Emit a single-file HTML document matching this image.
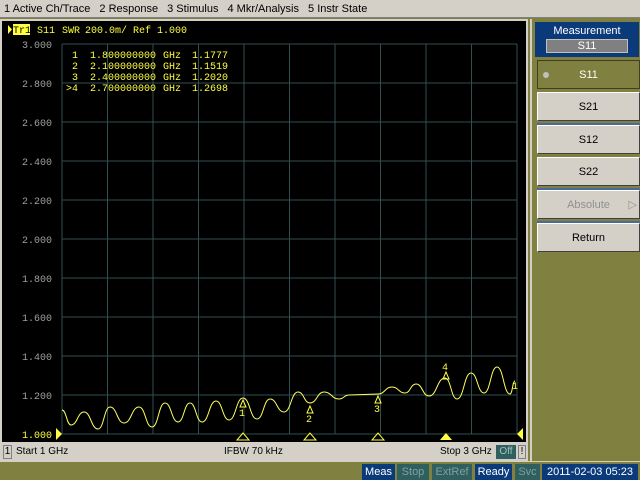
<!DOCTYPE html>
<html><head><style>
*{margin:0;padding:0;box-sizing:border-box}
body{width:640px;height:480px;background:#808040;position:relative;overflow:hidden;font-family:"Liberation Sans",sans-serif;font-size:11px}
#menu{position:absolute;left:0;top:0;width:640px;height:18px;background:#d4d0c8;border-bottom:1px solid #808080;font-size:11px;line-height:18px;color:#000}
#menu span{margin-left:4px;margin-right:5px}
#chart{position:absolute;left:0;top:19px;width:528px;height:425px;background:#000;border:2px solid #d4d0c8}
#status{position:absolute;left:0;top:443px;width:528px;height:18px;background:#d4d0c8;font-size:10px;line-height:18px}
#panel{position:absolute;left:530px;top:19px;width:110px;height:442px;background:#808040;border-left:2px solid #d4d0c8}
.btn{position:absolute;left:5px;width:103px;height:29px;background:#d4d0c8;border:1px solid #fff;border-right-color:#404040;border-bottom-color:#404040;text-align:center;line-height:28px;font-size:11px}
.sep{position:absolute;left:5px;width:103px;height:2px;background:#4a6a9a}
#bot{position:absolute;left:0;top:461px;width:640px;height:19px;background:#808040;border-top:1px solid #d4d0c8}
.st{position:absolute;top:2px;height:16px;line-height:16px;font-size:11px;text-align:center;color:#fff}
</style></head><body>
<div id="menu"><span>1 Active Ch/Trace</span><span>2 Response</span><span>3 Stimulus</span><span>4 Mkr/Analysis</span><span>5 Instr State</span></div>
<div id="chart"></div>
<svg style="position:absolute;left:0;top:0" width="528" height="444" font-family="Liberation Mono,monospace" font-size="10">
<g stroke="#2f5050" stroke-width="1">
<line x1="62" y1="44" x2="517" y2="44"/><line x1="62" y1="83" x2="517" y2="83"/><line x1="62" y1="122" x2="517" y2="122"/><line x1="62" y1="161" x2="517" y2="161"/><line x1="62" y1="200" x2="517" y2="200"/><line x1="62" y1="239" x2="517" y2="239"/><line x1="62" y1="278" x2="517" y2="278"/><line x1="62" y1="317" x2="517" y2="317"/><line x1="62" y1="356" x2="517" y2="356"/><line x1="62" y1="395" x2="517" y2="395"/><line x1="62" y1="434" x2="517" y2="434"/>
<line x1="62" y1="44" x2="62" y2="434"/><line x1="107.5" y1="44" x2="107.5" y2="434"/><line x1="153" y1="44" x2="153" y2="434"/><line x1="198.5" y1="44" x2="198.5" y2="434"/><line x1="244" y1="44" x2="244" y2="434"/><line x1="289.5" y1="44" x2="289.5" y2="434"/><line x1="335" y1="44" x2="335" y2="434"/><line x1="380.5" y1="44" x2="380.5" y2="434"/><line x1="426" y1="44" x2="426" y2="434"/><line x1="471.5" y1="44" x2="471.5" y2="434"/><line x1="517" y1="44" x2="517" y2="434"/>
</g>
<polygon points="8,25 12,29.5 8,34" fill="#ffff40"/>
<rect x="13" y="24" width="17" height="11" fill="#ffff40"/>
<text x="13" y="33" fill="#000" font-size="10">Tr1</text>
<g fill="#ffff40"><text x="37" y="33">S11</text><text x="62" y="33">SWR</text><text x="85" y="33">200.0m/</text><text x="133" y="33">Ref</text><text x="157" y="33">1.000</text></g>
<g fill="#a0a0a0" text-anchor="end"><text x="52" y="48">3.000</text><text x="52" y="87">2.800</text><text x="52" y="126">2.600</text><text x="52" y="165">2.400</text><text x="52" y="204">2.200</text><text x="52" y="243">2.000</text><text x="52" y="282">1.800</text><text x="52" y="321">1.600</text><text x="52" y="360">1.400</text><text x="52" y="399">1.200</text></g>
<text x="52" y="438" fill="#ffff40" text-anchor="end">1.000</text>
<g fill="#ffff40">
<text x="72" y="58">1</text><text x="90" y="58">1.800000000</text><text x="163" y="58">GHz</text><text x="192" y="58">1.1777</text>
<text x="72" y="69">2</text><text x="90" y="69">2.100000000</text><text x="163" y="69">GHz</text><text x="192" y="69">1.1519</text>
<text x="72" y="80">3</text><text x="90" y="80">2.400000000</text><text x="163" y="80">GHz</text><text x="192" y="80">1.2020</text>
<text x="66" y="91">&gt;4</text><text x="90" y="91">2.700000000</text><text x="163" y="91">GHz</text><text x="192" y="91">1.2698</text>
</g>
<path fill="none" stroke="#ffff60" stroke-width="1" d="M62,410 C66.5,410 66.5,425 71,425 C77.5,425 77.5,412 84,412 C91,412 91,429 98,429 C104,429 104,407 110,407 C117,407 117,423 124,423 C131.5,423 131.5,407 139,407 C145.5,407 145.5,427 152,427 C158.5,427 158.5,403 165,403 C171.5,403 171.5,422 178,422 C184,422 184,403 190,403 C196,403 196,422 202,422 C209,422 209,401 216,401 C222.5,401 222.5,420 229,420 C236,420 236,398 243,398 C250,398 250,419 257,419 C263.5,419 263.5,399 270,399 C277,399 277,412 284,412 C291,412 291,392 298,392 C304,392 304,403 310,403 C317,403 317,392 324,392 C331.5,392 331.5,399 339,399 C344,399 344,395 349,395 L378,394 C385,394 385,387 392,387 C398.5,387 398.5,393 405,393 C410.5,393 410.5,384 416,384 C422.5,384 422.5,396 429,396 C437,396 437,378 445,378 C451,378 451,399 457,399 C464,399 464,373 471,373 C477.5,373 477.5,393 484,393 C490.5,393 490.5,367 497,367 C503.5,367 503.5,394 510,394 C512.5,394 512.5,381 515,381"/>
<g fill="none" stroke="#ffff40"><polygon points="243,400 240,407 246,407"/><polygon points="310,406 307,413 313,413"/><polygon points="378,396 375,403 381,403"/><polygon points="446,372 443,379 449,379"/>
<polygon points="243,433 237,440 249,440"/><polygon points="310,433 304,440 316,440"/><polygon points="378,433 372,440 384,440"/></g>
<polygon points="446,433 440,440 452,440" fill="#ffff40"/>
<polygon points="56,428 62,434 56,440" fill="#ffff40"/><polygon points="523,428 517,434 523,440" fill="#ffff40"/>
<g fill="#ffff40" font-size="10"><text x="239" y="416">1</text><text x="306" y="422">2</text><text x="374" y="412">3</text><text x="442" y="370">4</text><text x="512" y="389">1</text></g>
</svg>
<div id="status"><span style="position:absolute;left:3px;top:2px;width:9px;height:14px;border:1px solid #808080;line-height:12px;text-align:center">1</span><span style="position:absolute;left:16px">Start 1 GHz</span><span style="position:absolute;left:224px">IFBW 70 kHz</span><span style="position:absolute;left:440px">Stop 3 GHz</span><span style="position:absolute;left:496px;top:2px;width:20px;height:14px;background:#2f5f5f;color:#a0c0c0;line-height:14px;text-align:center">Off</span><span style="position:absolute;left:518px;top:2px;width:8px;height:14px;border:1px solid #808080;line-height:12px;text-align:center">!</span></div>
<div id="panel">
<div style="position:absolute;left:3px;top:3px;width:104px;height:35px;background:#0a3a7a;color:#fff;text-align:center;font-size:11px;padding-top:3px">Measurement<div style="margin:2px auto 0;width:82px;height:14px;background:#808080;border:1px solid #c0c0c0;line-height:12px">S11</div></div>
<div class="btn" style="top:41px;background:#808040;color:#fff;border-color:#404020"><span style="position:absolute;left:5px;top:11px;width:6px;height:6px;border-radius:3px;background:#c0c0c0"></span>S11</div>
<div class="btn" style="top:73px">S21</div>
<div class="sep" style="top:104px"></div>
<div class="btn" style="top:106px">S12</div>
<div class="btn" style="top:138px">S22</div>
<div class="sep" style="top:169px"></div>
<div class="btn" style="top:171px;color:#909090">Absolute<span style="position:absolute;right:2px">&#9655;</span></div>
<div class="sep" style="top:202px"></div>
<div class="btn" style="top:204px">Return</div>
</div>
<div id="bot">
<div class="st" style="left:362px;width:33px;background:#0a3a7a">Meas</div>
<div class="st" style="left:397px;width:32px;background:#2f5f5f;color:#80a0a0">Stop</div>
<div class="st" style="left:432px;width:40px;background:#2f5f5f;color:#80a0a0">ExtRef</div>
<div class="st" style="left:475px;width:37px;background:#0a3a7a">Ready</div>
<div class="st" style="left:515px;width:25px;background:#2f5f5f;color:#80a0a0">Svc</div>
<div class="st" style="left:542px;width:96px;background:#0a3a7a">2011-02-03 05:23</div>
</div>
</body></html>
